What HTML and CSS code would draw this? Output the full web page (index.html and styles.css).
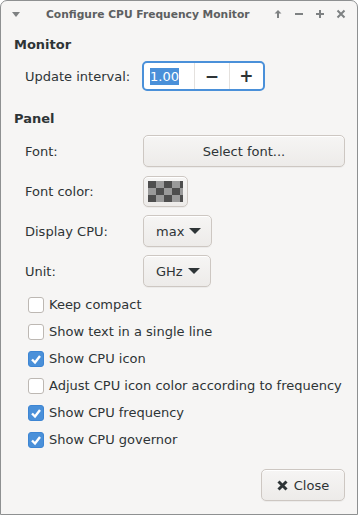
FILE: index.html
```html
<!DOCTYPE html>
<html lang="en">
<head>
    <meta charset="UTF-8">
    <title>Configure CPU Frequency Monitor</title>
    <link rel="stylesheet" href="styles.css">
</head>
<body>
    <div class="window">
        <header class="titlebar">
            <svg class="menu-icon" width="8" height="5" viewBox="0 0 8 5"><path d="M0 0h8L4 5z" fill="#7e8182"/></svg>
            <h1 class="title">Configure CPU Frequency Monitor</h1>
            <div class="wm-buttons">
                <svg width="10" height="10" viewBox="0 0 10 10"><path d="M5 1L1.5 4.5h2.5V9h2V4.5h2.5z" fill="#7e8182"/></svg>
                <svg width="10" height="10" viewBox="0 0 10 10"><path d="M1 4h8v2H1z" fill="#7e8182"/></svg>
                <svg width="10" height="10" viewBox="0 0 10 10"><path d="M4 1h2v3h3v2H6v3H4V6H1V4h3z" fill="#7e8182"/></svg>
                <svg width="10" height="10" viewBox="0 0 10 10"><path d="M1.5 1.5l7 7M8.5 1.5l-7 7" stroke="#7e8182" stroke-width="2"/></svg>
            </div>
        </header>

        <main class="content">
            <h2 class="section">Monitor</h2>
            <div class="form-row first">
                <label>Update interval:</label>
                <div class="spin">
                    <span class="spin-entry"><span class="selected">1.00</span></span>
                    <span class="spin-btn">&minus;</span>
                    <span class="spin-btn">+</span>
                </div>
            </div>

            <h2 class="section panel">Panel</h2>
            <div class="form-grid">
                <label>Font:</label>
                <button class="btn wide">Select font...</button>

                <label>Font color:</label>
                <button class="btn color-btn"><span class="swatch"></span></button>

                <label>Display CPU:</label>
                <button class="btn combo">max <span class="arrow"></span></button>

                <label>Unit:</label>
                <button class="btn combo">GHz <span class="arrow"></span></button>
            </div>

            <ul class="checks">
                <li><span class="box"></span>Keep compact</li>
                <li><span class="box"></span>Show text in a single line</li>
                <li><span class="box checked"></span>Show CPU icon</li>
                <li><span class="box"></span>Adjust CPU icon color according to frequency</li>
                <li><span class="box checked"></span>Show CPU frequency</li>
                <li><span class="box checked"></span>Show CPU governor</li>
            </ul>

            <div class="actions">
                <button class="btn close-btn">
                    <svg width="11" height="11" viewBox="0 0 11 11"><path d="M1.5 1.5l8 8M9.5 1.5l-8 8" stroke="#2e3436" stroke-width="3"/></svg>
                    Close
                </button>
            </div>
        </main>
    </div>
</body>
</html>
```

FILE: styles.css
```css
/* Reset and base styles */
* {
    margin: 0;
    padding: 0;
    box-sizing: border-box;
}

body {
    font-family: "DejaVu Sans", sans-serif;
    font-size: 13px;
    color: #2e3436;
    background-color: #ffffff;
}

.window {
    width: 358px;
    height: 515px;
    background-color: #f6f5f4;
    border: 1px solid #8e9091;
    border-radius: 7px 7px 0 0;
    display: flex;
    flex-direction: column;
}

/* title bar */
.titlebar {
    height: 26px;
    display: flex;
    align-items: center;
    padding: 0 11px 0 11px;
}
.menu-icon {
    margin-right: 26px;
}
.title {
    font-size: 10.7px;
    font-weight: bold;
    color: #5d6061;
    white-space: nowrap;
    flex: 1;
}
.wm-buttons {
    display: flex;
    gap: 11px;
}

/* content */
.content {
    flex: 1;
    display: flex;
    flex-direction: column;
    padding: 0 12px 13px 13px;
}
.section {
    font-size: 13px;
    font-weight: bold;
    line-height: 16px;
    margin-top: 10px;
}
.section.panel {
    margin-top: 20px;
}

.form-row {
    display: flex;
    align-items: center;
    padding-left: 11px;
    margin-top: 8px;
}
.form-row label {
    width: 117px;
}

.spin {
    display: flex;
    height: 30px;
    width: 123px;
    background-color: #ffffff;
    border: 2px solid #4a90d9;
    border-radius: 5px;
}
.spin-entry {
    width: 51px;
    display: flex;
    align-items: center;
    padding-left: 6px;
}
.selected {
    background-color: #4a90d9;
    color: #ffffff;
    line-height: 17px;
}
.spin-btn {
    width: 35px;
    display: flex;
    align-items: center;
    justify-content: center;
    border-left: 1px solid #e4e1de;
    font-size: 17px;
    font-weight: bold;
}

.form-grid {
    display: grid;
    grid-template-columns: 118px 1fr;
    grid-auto-rows: 32px;
    row-gap: 8px;
    align-items: center;
    justify-items: start;
    padding-left: 11px;
    margin-top: 8px;
}

.btn {
    font-family: inherit;
    font-size: 13px;
    color: #2e3436;
    height: 32px;
    border: 1px solid #cdc7c2;
    border-radius: 5px;
    background: linear-gradient(#f6f5f4, #edebe9);
    box-shadow: inset 0 1px #ffffff, 0 1px rgba(0, 0, 0, 0.04);
}
.btn.wide {
    width: 100%;
}
.color-btn {
    width: 45px;
    height: 31px;
    display: flex;
    align-items: center;
    justify-content: center;
}
.swatch {
    width: 35px;
    height: 21px;
    background-color: #9a9a9a;
    background-image: conic-gradient(#4e4e4e 25%, transparent 0 50%, #4e4e4e 0 75%, transparent 0);
    background-size: 16px 14px;
    background-position: 8px 0;
}
.combo {
    display: flex;
    align-items: center;
    padding: 0 10px 0 12px;
    gap: 5px;
}
.arrow {
    width: 0;
    height: 0;
    border-left: 6px solid transparent;
    border-right: 6px solid transparent;
    border-top: 6px solid #2e3436;
}

/* check buttons */
.checks {
    list-style: none;
    margin-top: 4px;
    padding-left: 14px;
}
.checks li {
    height: 27px;
    display: flex;
    align-items: center;
    gap: 5px;
}
.box {
    width: 16px;
    height: 16px;
    border: 1px solid #bdb8b3;
    border-radius: 3px;
    background-color: #ffffff;
}
.box.checked {
    border-color: #3d85d3;
    background-color: #4a90d9;
    background-image: url("data:image/svg+xml,%3Csvg xmlns='http://www.w3.org/2000/svg' viewBox='0 0 14 14'%3E%3Cpath d='M3 7.5l3 3 5-6.5' fill='none' stroke='white' stroke-width='2.4'/%3E%3C/svg%3E");
    background-size: 14px 14px;
}

.actions {
    margin-top: auto;
    display: flex;
    justify-content: flex-end;
}
.close-btn {
    width: 84px;
    display: flex;
    align-items: center;
    justify-content: center;
    gap: 6px;
}
```
